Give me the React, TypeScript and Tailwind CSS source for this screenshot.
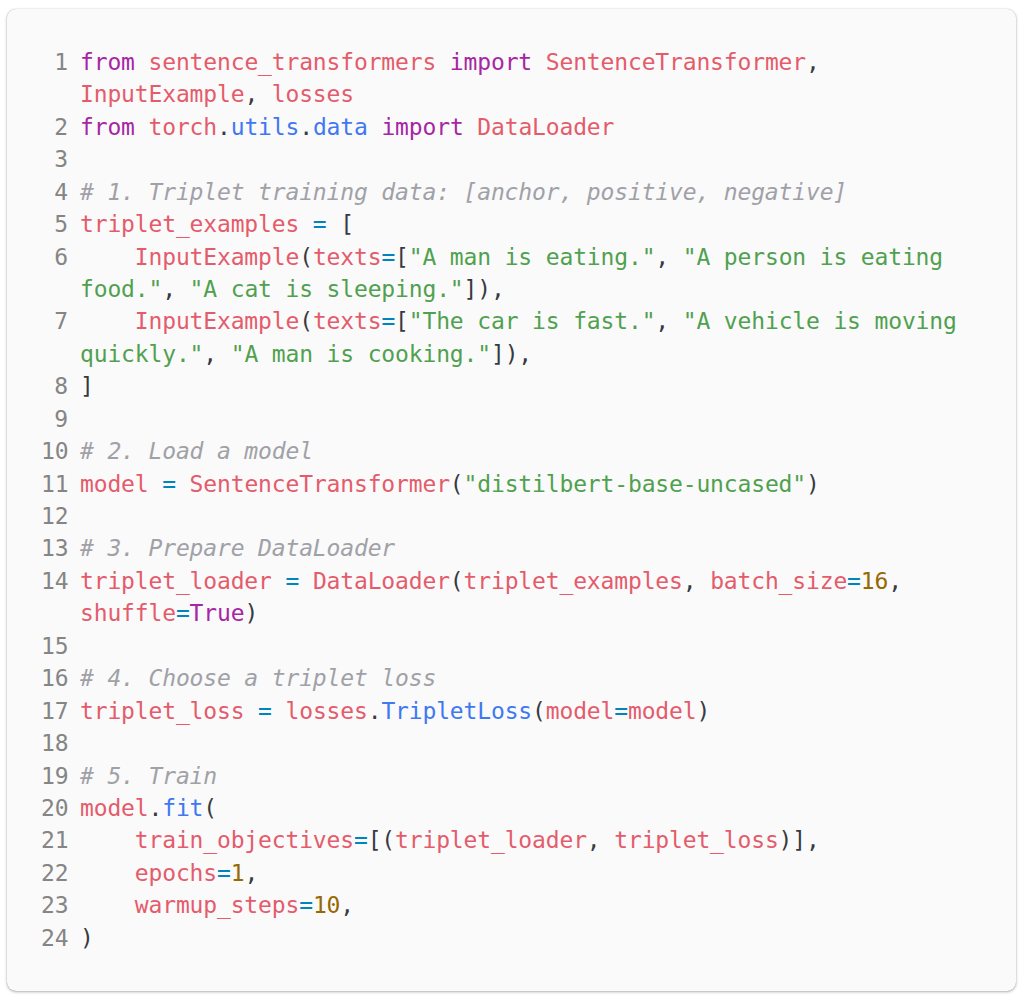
import React from "react";

type Tok = [string, string];

const C: Record<string, string> = {
  k: "text-[#a626a4]",
  v: "text-[#e45c6c]",
  f: "text-[#4078f2]",
  s: "text-[#50a14f]",
  o: "text-[#0184bc]",
  n: "text-[#986801]",
  c: "text-[#a0a1a7] italic",
  p: "text-[#383a42]",
  t: "",
};

const lines: Tok[][][] = [
  [
    [["k", "from"], ["t", " "], ["v", "sentence_transformers"], ["t", " "], ["k", "import"], ["t", " "], ["v", "SentenceTransformer"], ["p", ","]],
    [["v", "InputExample"], ["p", ", "], ["v", "losses"]],
  ],
  [[["k", "from"], ["t", " "], ["v", "torch"], ["p", "."], ["f", "utils"], ["p", "."], ["f", "data"], ["t", " "], ["k", "import"], ["t", " "], ["v", "DataLoader"]]],
  [[]],
  [[["c", "# 1. Triplet training data: [anchor, positive, negative]"]]],
  [[["v", "triplet_examples"], ["t", " "], ["o", "="], ["t", " "], ["p", "["]]],
  [
    [["t", "    "], ["v", "InputExample"], ["p", "("], ["v", "texts"], ["o", "="], ["p", "["], ["s", "\"A man is eating.\""], ["p", ", "], ["s", "\"A person is eating"]],
    [["s", "food.\""], ["p", ", "], ["s", "\"A cat is sleeping.\""], ["p", "]),"]],
  ],
  [
    [["t", "    "], ["v", "InputExample"], ["p", "("], ["v", "texts"], ["o", "="], ["p", "["], ["s", "\"The car is fast.\""], ["p", ", "], ["s", "\"A vehicle is moving"]],
    [["s", "quickly.\""], ["p", ", "], ["s", "\"A man is cooking.\""], ["p", "]),"]],
  ],
  [[["p", "]"]]],
  [[]],
  [[["c", "# 2. Load a model"]]],
  [[["v", "model"], ["t", " "], ["o", "="], ["t", " "], ["v", "SentenceTransformer"], ["p", "("], ["s", "\"distilbert-base-uncased\""], ["p", ")"]]],
  [[]],
  [[["c", "# 3. Prepare DataLoader"]]],
  [
    [["v", "triplet_loader"], ["t", " "], ["o", "="], ["t", " "], ["v", "DataLoader"], ["p", "("], ["v", "triplet_examples"], ["p", ", "], ["v", "batch_size"], ["o", "="], ["n", "16"], ["p", ","]],
    [["v", "shuffle"], ["o", "="], ["k", "True"], ["p", ")"]],
  ],
  [[]],
  [[["c", "# 4. Choose a triplet loss"]]],
  [[["v", "triplet_loss"], ["t", " "], ["o", "="], ["t", " "], ["v", "losses"], ["p", "."], ["f", "TripletLoss"], ["p", "("], ["v", "model"], ["o", "="], ["v", "model"], ["p", ")"]]],
  [[]],
  [[["c", "# 5. Train"]]],
  [[["v", "model"], ["p", "."], ["f", "fit"], ["p", "("]]],
  [[["t", "    "], ["v", "train_objectives"], ["o", "="], ["p", "[("], ["v", "triplet_loader"], ["p", ", "], ["v", "triplet_loss"], ["p", ")],"]]],
  [[["t", "    "], ["v", "epochs"], ["o", "="], ["n", "1"], ["p", ","]]],
  [[["t", "    "], ["v", "warmup_steps"], ["o", "="], ["n", "10"], ["p", ","]]],
  [[["p", ")"]]],
];

export default function App() {
  return (
    <div className="min-h-screen bg-white pl-[7px] pt-[9px]">
      <div
        className="w-[1009px] rounded-[9px] bg-[#fafafa] pl-[34px] pt-[37px] pb-[37px] shadow-[0_1px_3px_rgba(0,0,0,0.3),0_0_1px_rgba(0,0,0,0.25)] text-[#383a42] text-[23px] tracking-[-0.15px] leading-[32.43px]"
        style={{ fontFamily: '"DejaVu Sans Mono", monospace' }}
      >
        {lines.map((vl, i) => (
          <div key={i} className="flex">
            <div className="w-[27px] shrink-0 text-right text-[#858585] mr-[12px]">{i + 1}</div>
            <div className="flex flex-col">
              {vl.map((toks, j) => (
                <div key={j} className="whitespace-pre h-[32.43px]">
                  {toks.map((t, k) => (
                    <span key={k} className={C[t[0]]}>
                      {t[1]}
                    </span>
                  ))}
                </div>
              ))}
            </div>
          </div>
        ))}
      </div>
    </div>
  );
}
